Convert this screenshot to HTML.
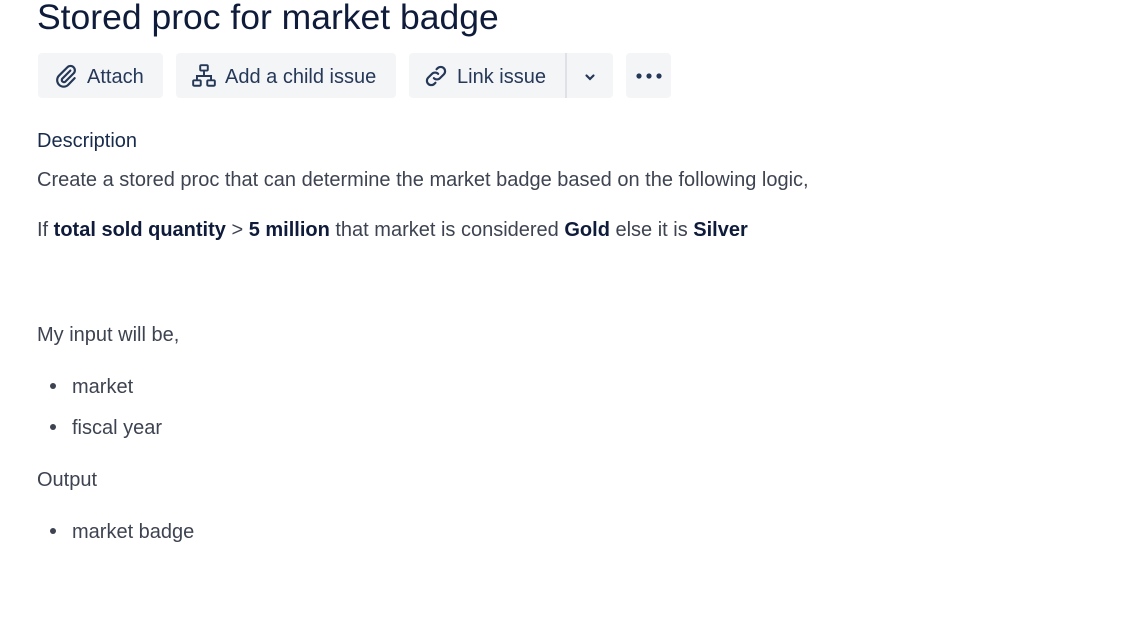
<!DOCTYPE html>
<html><head><meta charset="utf-8"><style>
body{margin:0;width:1122px;height:620px;background:#fff;overflow:hidden;font-family:"Liberation Sans",sans-serif;position:relative}
.t{position:absolute;white-space:nowrap;line-height:1}
h1{position:absolute;left:37px;top:-2px;margin:0;font-size:35.5px;font-weight:normal;color:#0f1b3a;line-height:38px;letter-spacing:0}
.btn{position:absolute;top:53px;height:45px;background:#f4f5f7;border-radius:4px;color:#253858;font-size:20px;display:flex;align-items:center;box-sizing:border-box;padding-top:3px}
.btn svg{margin-right:8px;margin-top:-3px}
.d{color:#172b4d;font-size:20px}
.b{color:#3d4350;font-size:20px}
b{color:#0f1b3a}
.dot{position:absolute;width:6px;height:6px;border-radius:50%;background:#3d4350}
</style></head><body>
<h1>Stored proc for market badge</h1>
<div class="btn" style="left:38px;width:125px;padding-left:15px"><svg width="26" height="26" viewBox="0 0 24 24" fill="none" stroke="#253858" stroke-width="2" stroke-linecap="round"><path d="M16 7l-7.5 7.5a2 2 0 0 0 2.8 2.8L19 9.6a4 4 0 0 0-5.7-5.7L5.6 11.6a6 6 0 0 0 8.5 8.5L20 14"/></svg>Attach</div>
<div class="btn" style="left:176px;width:220px;padding-left:15px"><svg width="26" height="26" viewBox="0 0 24 24" fill="none" stroke="#253858" stroke-width="1.8"><rect x="8.5" y="2" width="7" height="5" rx="1"/><rect x="2" y="16" width="7" height="5" rx="1"/><rect x="15" y="16" width="7" height="5" rx="1"/><path d="M12 7v5M5.5 16v-4h13v4"/></svg>Add a child issue</div>
<div class="btn" style="left:409px;width:157px;padding-left:14px;border-radius:4px 0 0 4px"><svg width="26" height="26" viewBox="0 0 24 24" fill="none" stroke="#253858" stroke-width="2" stroke-linecap="round"><path d="M10 14a4 4 0 0 0 5.7 0l3.5-3.5a4 4 0 0 0-5.7-5.7l-1 1"/><path d="M14 10a4 4 0 0 0-5.7 0l-3.5 3.5a4 4 0 0 0 5.7 5.7l1-1"/></svg>Link issue</div>
<div style="position:absolute;left:565px;top:53px;width:2px;height:45px;background:#dfe1e6"></div>
<div class="btn" style="left:567px;width:46px;justify-content:center;border-radius:0 4px 4px 0"><svg width="14" height="14" viewBox="0 0 14 14" fill="none" stroke="#253858" stroke-width="2.2" stroke-linecap="round" style="margin:0"><path d="M3.5 5.5L7 9l3.5-3.5"/></svg></div>
<div class="btn" style="left:626px;width:45px;justify-content:center"><svg width="28" height="8" viewBox="0 0 28 8" fill="#253858" style="margin:-3px 0 0"><circle cx="4" cy="4" r="2.6"/><circle cx="14" cy="4" r="2.6"/><circle cx="24" cy="4" r="2.6"/></svg></div>
<div class="t d" style="left:37px;top:131px">Description</div>
<div class="t b" style="left:37px;top:170px">Create a stored proc that can determine the market badge based on the following logic,</div>
<div class="t b" style="left:37px;top:220px">If <b>total sold quantity</b> &gt; <b>5 million</b> that market is considered <b>Gold</b> else it is <b>Silver</b></div>
<div class="t b" style="left:37px;top:325px">My input will be,</div>
<div class="dot" style="left:50px;top:383px"></div><div class="t b" style="left:72px;top:377px">market</div>
<div class="dot" style="left:50px;top:424px"></div><div class="t b" style="left:72px;top:418px">fiscal year</div>
<div class="t b" style="left:37px;top:470px">Output</div>
<div class="dot" style="left:50px;top:528px"></div><div class="t b" style="left:72px;top:522px">market badge</div>
</body></html>
